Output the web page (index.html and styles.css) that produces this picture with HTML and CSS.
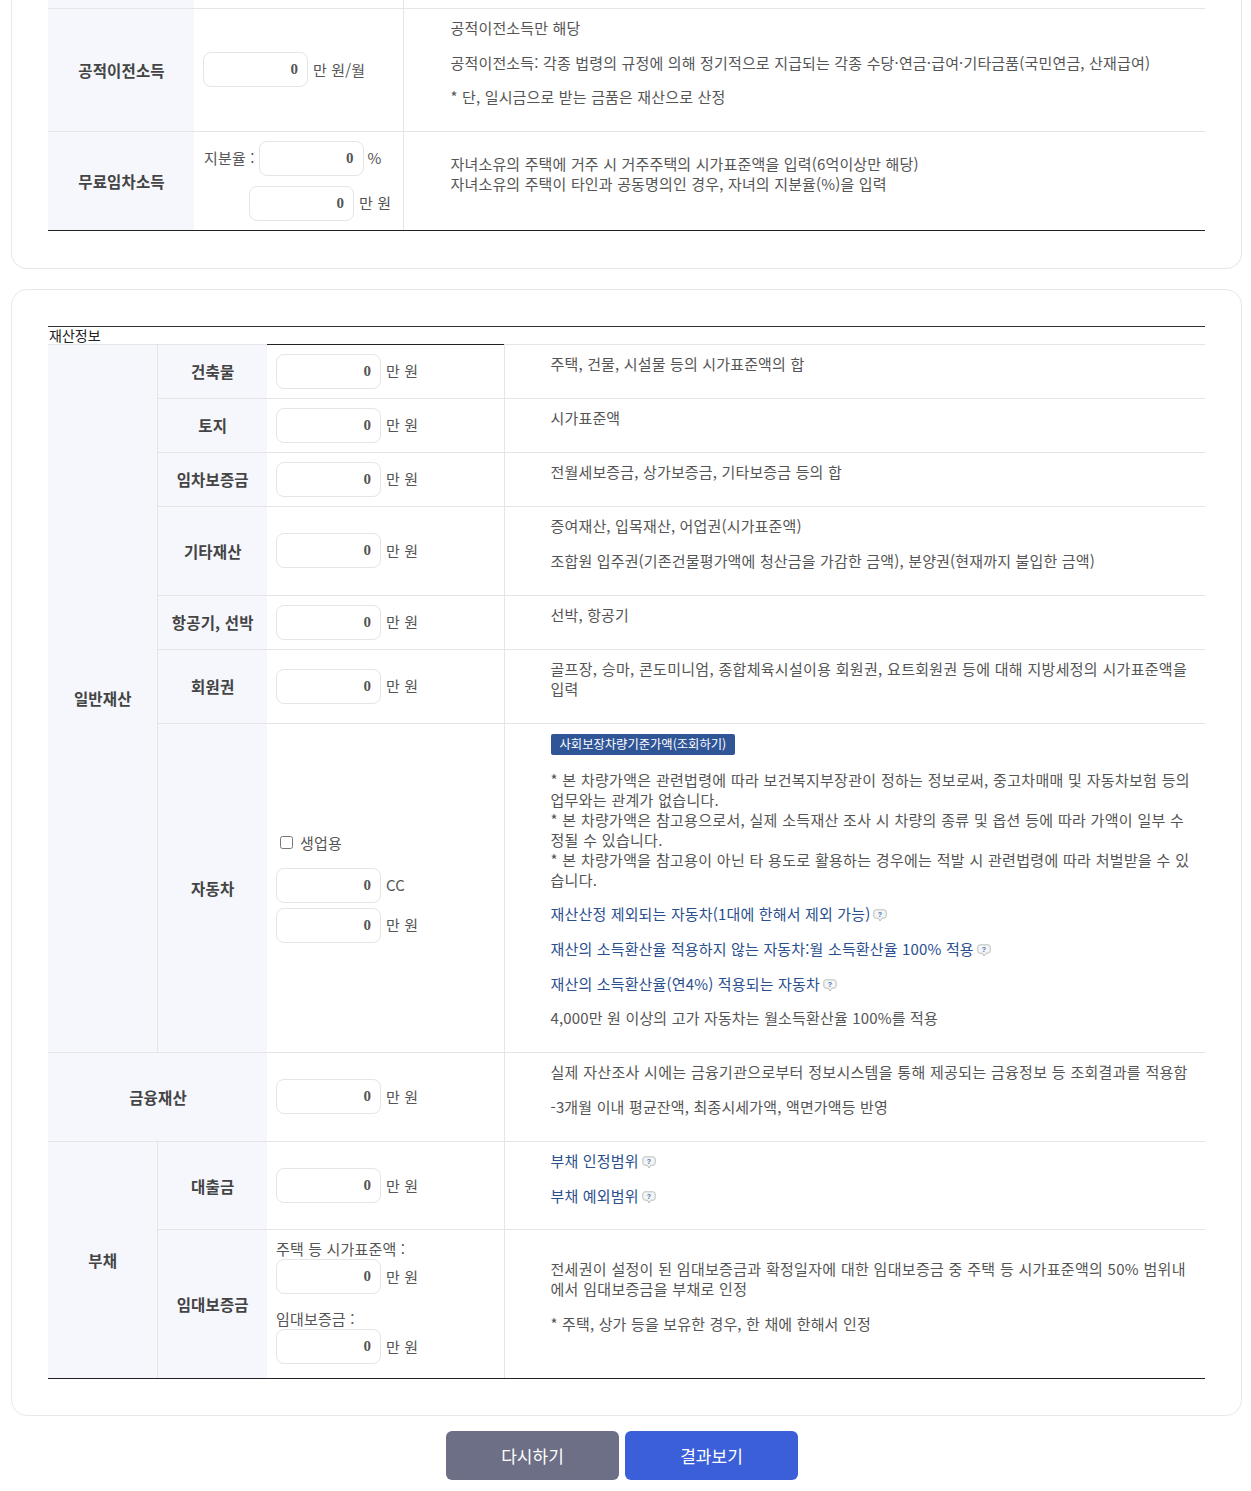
FILE: index.html
```html
<!DOCTYPE html>
<html lang="ko">
<head>
    <meta charset="UTF-8">
    <meta name="viewport" content="width=device-width, initial-scale=1.0">
    <title>재산정보 입력</title>
    <link rel="stylesheet" href="styles.css">
</head>
<body>
    <svg class="defs" width="0" height="0">
        <symbol id="help" viewBox="0 0 14 13">
            <path d="M3 .8h8A2.2 2.2 0 0 1 13.2 3v4A2.2 2.2 0 0 1 11 9.2H9L7 12 5.5 9.2H3A2.2 2.2 0 0 1 .8 7V3A2.2 2.2 0 0 1 3 .8z" fill="#f4f5f4" stroke="#b9c0bd" stroke-width="1"/>
            <text x="7" y="7.6" text-anchor="middle" font-size="7" font-weight="700" font-family="Liberation Sans" fill="#3f6fb5">?</text>
        </symbol>
    </svg>
    <div class="card card-cut">
        <table class="form-table income">
            <colgroup><col class="col-head"><col class="col-field"><col></colgroup>
            <tr class="stub">
                <th></th>
                <td class="field-cell"></td>
                <td class="desc"></td>
            </tr>
            <tr>
                <th>공적이전소득</th>
                <td class="field-cell">
                    <div class="field"><input class="num" value="0"><span>만 원/월</span></div>
                </td>
                <td class="desc">
                    <p>공적이전소득만 해당</p>
                    <p>공적이전소득: 각종 법령의 규정에 의해 정기적으로 지급되는 각종 수당·연금·급여·기타금품(국민연금, 산재급여)</p>
                    <p>* 단, 일시금으로 받는 금품은 재산으로 산정</p>
                </td>
            </tr>
            <tr class="last">
                <th>무료임차소득</th>
                <td class="field-cell">
                    <div class="field field-gap"><span>지분율 :</span><input class="num" value="0"><span>%</span></div>
                    <div class="field field-push"><input class="num" value="0"><span>만 원</span></div>
                </td>
                <td class="desc">
                    <p>자녀소유의 주택에 거주 시 거주주택의 시가표준액을 입력(6억이상만 해당)<br>자녀소유의 주택이 타인과 공동명의인 경우, 자녀의 지분율(%)을 입력</p>
                </td>
            </tr>
        </table>
    </div>

    <div class="card">
        <div class="table-title">재산정보</div>
        <table class="form-table assets">
            <colgroup><col class="col-group"><col class="col-name"><col class="col-input"><col></colgroup>
            <tr class="first">
                <th class="group" rowspan="7">일반재산</th>
                <th>건축물</th>
                <td class="field-cell"><div class="field"><input class="num" value="0"><span>만 원</span></div></td>
                <td class="desc"><p>주택, 건물, 시설물 등의 시가표준액의 합</p></td>
            </tr>
            <tr>
                <th>토지</th>
                <td class="field-cell"><div class="field"><input class="num" value="0"><span>만 원</span></div></td>
                <td class="desc"><p>시가표준액</p></td>
            </tr>
            <tr>
                <th>임차보증금</th>
                <td class="field-cell"><div class="field"><input class="num" value="0"><span>만 원</span></div></td>
                <td class="desc"><p>전월세보증금, 상가보증금, 기타보증금 등의 합</p></td>
            </tr>
            <tr>
                <th>기타재산</th>
                <td class="field-cell"><div class="field"><input class="num" value="0"><span>만 원</span></div></td>
                <td class="desc">
                    <p>증여재산, 입목재산, 어업권(시가표준액)</p>
                    <p>조합원 입주권(기존건물평가액에 청산금을 가감한 금액), 분양권(현재까지 불입한 금액)</p>
                </td>
            </tr>
            <tr>
                <th>항공기, 선박</th>
                <td class="field-cell"><div class="field"><input class="num" value="0"><span>만 원</span></div></td>
                <td class="desc"><p>선박, 항공기</p></td>
            </tr>
            <tr>
                <th>회원권</th>
                <td class="field-cell"><div class="field"><input class="num" value="0"><span>만 원</span></div></td>
                <td class="desc"><p class="wide">골프장, 승마, 콘도미니엄, 종합체육시설이용 회원권, 요트회원권 등에 대해 지방세정의 시가표준액을 입력</p></td>
            </tr>
            <tr>
                <th>자동차</th>
                <td class="field-cell">
                    <label class="check"><input type="checkbox"><span>생업용</span></label>
                    <div class="field field-tight"><input class="num" value="0"><span>CC</span></div>
                    <div class="field"><input class="num" value="0"><span>만 원</span></div>
                </td>
                <td class="desc desc-tight">
                    <p><a class="badge" href="#">사회보장차량기준가액(조회하기)</a></p>
                    <p class="wide">* 본 차량가액은 관련법령에 따라 보건복지부장관이 정하는 정보로써, 중고차매매 및 자동차보험 등의 업무와는 관계가 없습니다.<br>* 본 차량가액은 참고용으로서, 실제 소득재산 조사 시 차량의 종류 및 옵션 등에 따라 가액이 일부 수정될 수 있습니다.<br>* 본 차량가액을 참고용이 아닌 타 용도로 활용하는 경우에는 적발 시 관련법령에 따라 처벌받을 수 있습니다.</p>
                    <p><a class="link" href="#">재산산정 제외되는 자동차(1대에 한해서 제외 가능)<svg class="help"><use href="#help"/></svg></a></p>
                    <p><a class="link" href="#">재산의 소득환산율 적용하지 않는 자동차:월 소득환산율 100% 적용<svg class="help"><use href="#help"/></svg></a></p>
                    <p><a class="link" href="#">재산의 소득환산율(연4%) 적용되는 자동차<svg class="help"><use href="#help"/></svg></a></p>
                    <p>4,000만 원 이상의 고가 자동차는 월소득환산율 100%를 적용</p>
                </td>
            </tr>
            <tr>
                <th colspan="2">금융재산</th>
                <td class="field-cell"><div class="field"><input class="num" value="0"><span>만 원</span></div></td>
                <td class="desc">
                    <p class="wide">실제 자산조사 시에는 금융기관으로부터 정보시스템을 통해 제공되는 금융정보 등 조회결과를 적용함</p>
                    <p>-3개월 이내 평균잔액, 최종시세가액, 액면가액등 반영</p>
                </td>
            </tr>
            <tr class="last">
                <th class="group" rowspan="2">부채</th>
                <th class="plain">대출금</th>
                <td class="field-cell plain"><div class="field"><input class="num" value="0"><span>만 원</span></div></td>
                <td class="desc desc-tight plain">
                    <p><a class="link" href="#">부채 인정범위<svg class="help"><use href="#help"/></svg></a></p>
                    <p><a class="link" href="#">부채 예외범위<svg class="help"><use href="#help"/></svg></a></p>
                </td>
            </tr>
            <tr class="last">
                <th>임대보증금</th>
                <td class="field-cell">
                    <div class="field-label">주택 등 시가표준액 :</div>
                    <div class="field field-wide"><input class="num" value="0"><span>만 원</span></div>
                    <div class="field-label">임대보증금 :</div>
                    <div class="field field-end"><input class="num" value="0"><span>만 원</span></div>
                </td>
                <td class="desc">
                    <p class="wide">전세권이 설정이 된 임대보증금과 확정일자에 대한 임대보증금 중 주택 등 시가표준액의 50% 범위내에서 임대보증금을 부채로 인정</p>
                    <p>* 주택, 상가 등을 보유한 경우, 한 채에 한해서 인정</p>
                </td>
            </tr>
        </table>
    </div>

    <div class="button-container">
        <button class="button reset-button">다시하기</button>
        <button class="button result-button">결과보기</button>
    </div>
</body>
</html>
```

FILE: styles.css
```css
body, html {
    margin: 0;
    padding: 0;
    background-color: #fff;
    color: #555;
    font-family: "Noto Sans CJK KR", "Noto Sans", sans-serif;
    font-size: 15px;
    line-height: 20px;
    letter-spacing: 0.16px;
}
.defs {
    display: none;
}
.card {
    margin: 0 9px 21px 11px;
    padding: 36px;
    background-color: #fff;
    border: 1px solid #e8e8e8;
    border-radius: 16px;
}
.card-cut {
    margin-bottom: 20px;
    padding-top: 0;
    padding-bottom: 37px;
    border-top: none;
    border-radius: 0 0 16px 16px;
}
.table-title {
    height: 17px;
    padding-left: 1px;
    border-top: 1px solid #333;
    color: #222;
    font-size: 14px;
    line-height: 17px;
    letter-spacing: 0;
}
.form-table {
    width: 100%;
    table-layout: fixed;
    border-collapse: collapse;
}
.col-head { width: 146px; }
.col-field { width: 209px; }
.col-group { width: 109px; }
.col-name { width: 110px; }
.col-input { width: 237px; }
.form-table th {
    padding: 0 0 0 1px;
    background-color: #f5f7fc;
    border-bottom: 1px solid #e5e5e5;
    color: #444;
    font-size: 15.5px;
    font-weight: 700;
    text-align: center;
}
.form-table td {
    padding: 9px;
    border-bottom: 1px solid #e5e5e5;
}
.form-table .last th, .form-table .last td {
    border-bottom: 1px solid #222;
}
.form-table .last .plain {
    border-bottom: 1px solid #e5e5e5;
}
.form-table .group {
    border-right: 1px solid #e5e5e5;
}
.form-table .field-cell {
    border-right: 1px solid #e5e5e5;
}
.assets {
    border-top: 1px solid #e5e5e5;
}
.assets .first .field-cell {
    border-top: 1px solid #222;
}
.form-table .stub td, .form-table .stub th {
    height: 8px;
    padding: 0;
}
.form-table .desc {
    padding-left: 46px;
    padding-right: 10px;
}
.form-table.income .desc {
    padding-left: 47px;
}
.desc p {
    margin: 0 0 15px;
}
.income .desc p, .desc-tight p {
    margin-bottom: 14.67px;
}
.desc .wide {
    letter-spacing: 0.3px;
}
.field {
    display: flex;
    align-items: center;
    gap: 5px;
    white-space: nowrap;
}
.field-gap {
    margin-bottom: 10px;
    margin-left: 1px;
    gap: 4px;
}
.field-push {
    margin-left: 46px;
}
.field-tight {
    margin-bottom: 5px;
}
.field-wide {
    margin-bottom: 15px;
}
.field-end {
    margin-bottom: 5px;
}
.num {
    box-sizing: border-box;
    flex: none;
    width: 105px;
    height: 35px;
    padding: 0 9px;
    background-color: #fff;
    border: 1px solid #e5e5e5;
    border-radius: 8px;
    color: #555;
    font-family: "Liberation Serif", serif;
    font-size: 15px;
    font-weight: 700;
    text-align: right;
}
.check {
    display: flex;
    align-items: center;
    gap: 7px;
    margin-bottom: 15px;
    padding-left: 4px;
}
.check input {
    width: 13px;
    height: 13px;
    margin: 0;
}
.badge {
    display: inline-block;
    height: 21px;
    padding: 0 9px;
    background-color: #2f5597;
    border-radius: 2px;
    color: #fff;
    font-size: 12.3px;
    line-height: 21px;
    letter-spacing: 0;
    text-decoration: none;
}
.link {
    color: #2a4f8f;
    text-decoration: none;
}
.help {
    width: 14px;
    height: 13px;
    margin-left: 3px;
    vertical-align: -2px;
}
.button-container {
    display: flex;
    justify-content: center;
    gap: 6px;
    margin: -6px 0 11px;
    padding-right: 7px;
}
.button {
    width: 173px;
    height: 49px;
    border: none;
    border-radius: 6px;
    color: #fff;
    font-family: inherit;
    font-size: 17px;
    cursor: pointer;
}
.reset-button {
    background-color: #6c6f85;
}
.result-button {
    background-color: #3b5fd9;
}
```
